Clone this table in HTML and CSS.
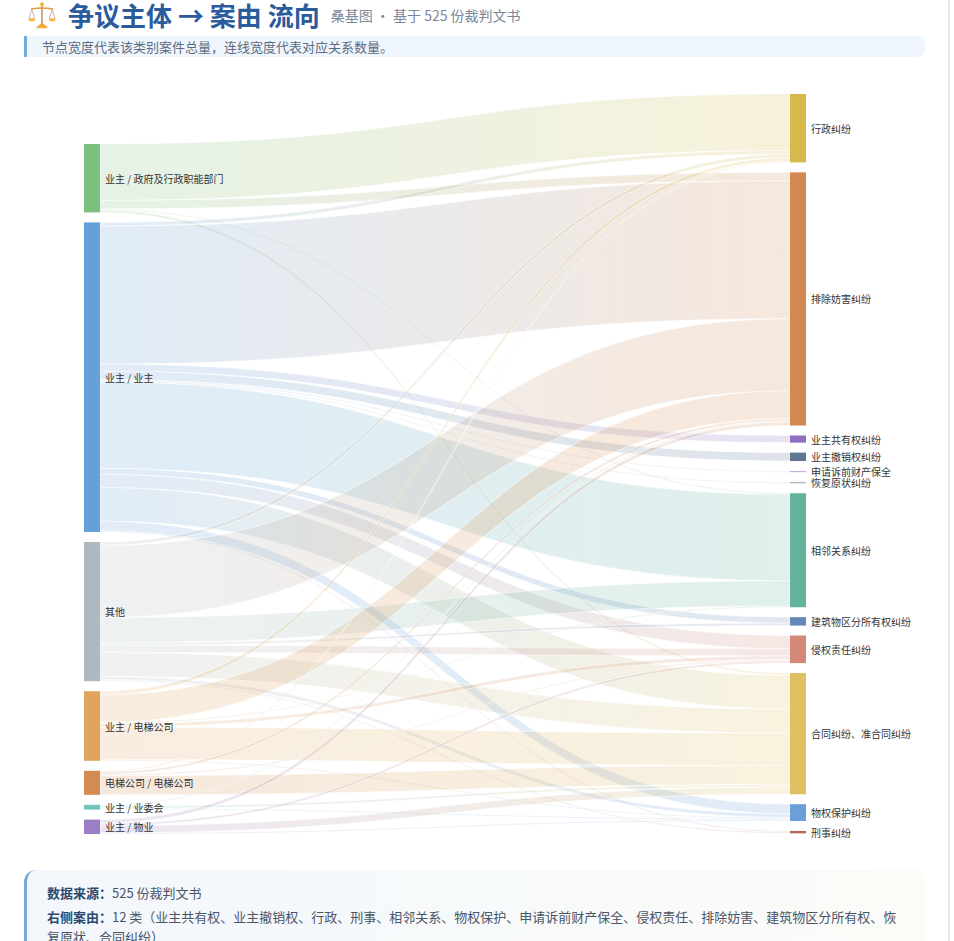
FILE: index.html
```html
<!DOCTYPE html>
<html lang="zh-CN">
<head>
<meta charset="utf-8">
<title>争议主体 → 案由 流向</title>
<link rel="stylesheet" href="styles.css">
</head>
<body>
<div class="page">
  <header class="header">
    <svg class="icon" viewBox="0 0 28 28" width="28" height="28" aria-hidden="true">
      <rect x="13.1" y="4" width="1.8" height="19" fill="#c9a27a"/>
      <path d="M3.5 8 Q14 6 24.5 8" stroke="#dc9c3b" stroke-width="1.7" fill="none" stroke-linecap="round"/>
      <circle cx="14" cy="3.2" r="2" fill="#f5b83f"/>
      <path d="M3.8 8.4 L1 17.2 M3.8 8.4 L6.6 17.2 M24.2 8.4 L21.4 17.2 M24.2 8.4 L27 17.2" stroke="#c7a0a6" stroke-width="0.8" fill="none"/>
      <path d="M0.3 17.2 h7 a3.5 3.3 0 0 1 -7 0z" fill="#f6b940"/>
      <path d="M20.7 17.2 h7 a3.5 3.3 0 0 1 -7 0z" fill="#f6b940"/>
      <path d="M9.5 25.5 L14 21.5 L18.5 25.5 Z" fill="#ef9f38"/>
      <rect x="8.5" y="25" width="11" height="2.2" rx="1" fill="#f3ae3c"/>
    </svg>
    <h1 class="title">争议主体 → 案由 流向</h1>
    <span class="subtitle">桑基图 · 基于 525 份裁判文书</span>
  </header>
  <p class="desc">节点宽度代表该类别案件总量，连线宽度代表对应关系数量。</p>
  <svg id="sankey" class="chart" width="948" height="800" viewBox="0 60 948 800"></svg>
  <div class="note">
    <p><b>数据来源：</b>525 份裁判文书</p>
    <p><b>右侧案由：</b>12 类（业主共有权、业主撤销权、行政、刑事、相邻关系、物权保护、申请诉前财产保全、侵权责任、排除妨害、建筑物区分所有权、恢复原状、合同纠纷）</p>
  </div>
</div>
<script src="sankey.js"></script>
</body>
</html>
```

FILE: styles.css
```css
html { overflow: hidden; }
body {
  margin: 0;
  background: #ffffff;
  font-family: "Noto Sans CJK SC", "Noto Sans", sans-serif;
}
.page {
  width: 948px;
  min-height: 941px;
  border-right: 2px solid #e3ebf4;
}
.header {
  display: flex;
  align-items: center;
  height: 30px;
  padding-left: 28px;
}
.icon { flex: none; width: 28px; height: 28px; }
.title {
  flex: none;
  margin: 0 0 0 12px;
  font-size: 26px;
  font-weight: 700;
  line-height: 30px;
  color: #2a5b9c;
  white-space: nowrap;
}
.subtitle {
  flex: none;
  margin-left: 11px;
  font-size: 14px;
  line-height: 30px;
  color: #7b8798;
  white-space: nowrap;
}
.desc {
  margin: 6px 0 0 24px;
  width: 883px;
  height: 21px;
  padding-left: 15px;
  border-left: 3px solid #75aadb;
  border-radius: 0 8px 8px 0;
  background: #f0f6fd;
  font-size: 13px;
  line-height: 21px;
  color: #5b6b80;
}
.chart { display: block; margin-top: 3px; }
.node-label {
  font-size: 10px;
  fill: #333333;
}
.note {
  margin: 10px 0 0 24px;
  width: 858px;
  padding: 13px 20px;
  border-left: 3px solid #75aadb;
  border-radius: 12px 12px 0 0;
  background: linear-gradient(90deg, #f3f7fc, #fbfcf8);
  font-size: 13px;
  line-height: 20px;
  color: #4a5568;
}
.note p { margin: 0 0 4px; }
.note b { color: #2c4a70; }
```

FILE: sankey.js
```js
(function () {
  var k = 1.2;
  var LX = 84, RX = 790, NW = 16;
  var left = [
    ['业主 / 政府及行政职能部门', '#7cc07f'],
    ['业主 / 业主', '#66a0d9'],
    ['其他', '#adb8bf'],
    ['业主 / 电梯公司', '#e0a45e'],
    ['电梯公司 / 电梯公司', '#d48b52'],
    ['业主 / 业委会', '#72c5bc'],
    ['业主 / 物业', '#9b7fc6']
  ];
  var right = [
    ['行政纠纷', '#d6b94a'],
    ['排除妨害纠纷', '#d38a52'],
    ['业主共有权纠纷', '#8f6fbf'],
    ['业主撤销权纠纷', '#5f7591'],
    ['申请诉前财产保全', '#c4aede'],
    ['恢复原状纠纷', '#a6b2c0'],
    ['相邻关系纠纷', '#63b39d'],
    ['建筑物区分所有权纠纷', '#6588b9'],
    ['侵权责任纠纷', '#d38878'],
    ['合同纠纷、准合同纠纷', '#dfbf5f'],
    ['物权保护纠纷', '#6a9fda'],
    ['刑事纠纷', '#b5665c']
  ];
  var raw = [
    [0,0,47],[0,1,7],[0,6,1],[0,9,2],
    [1,0,3],[1,1,115],[1,2,6],[1,3,7],[1,4,1],[1,5,1],[1,6,72],[1,7,5],[1,8,11],[1,9,28],[1,10,8],[1,11,1],
    [2,0,3],[2,1,60],[2,6,21],[2,7,2],[2,8,6],[2,9,20],[2,10,3],[2,11,1],
    [3,0,3],[3,1,23],[3,6,1],[3,8,3],[3,9,27],[3,10,1],
    [4,0,1],[4,1,2],[4,8,1],[4,9,16],
    [5,1,1],[5,9,2],[5,10,1],
    [6,1,3],[6,8,2],[6,9,6],[6,10,1]
  ];
  var links = raw.map(function (r) { return { s: r[0], t: r[1], v: r[2], w: r[2] * k }; });

  function layout(nodes, key, top, gap) {
    var y = top;
    return nodes.map(function (n, i) {
      var v = 0;
      links.forEach(function (l) { if (l[key] === i) v += l.v; });
      var h = v * k;
      var o = { name: n[0], color: n[1], y0: y, h: h };
      y += h + gap;
      return o;
    });
  }
  var L = layout(left, 's', 144, 10);
  var R = layout(right, 't', 94, 9.94);

  var sOff = L.map(function (n) { return n.y0; });
  var tOff = R.map(function (n) { return n.y0; });
  links.slice().sort(function (a, b) { return a.s - b.s || a.t - b.t; })
    .forEach(function (l) { l.sy = sOff[l.s]; sOff[l.s] += l.w; });
  links.slice().sort(function (a, b) { return a.t - b.t || a.s - b.s; })
    .forEach(function (l) { l.ty = tOff[l.t]; tOff[l.t] += l.w; });

  var x0 = LX + NW, x1 = RX, xm = (x0 + x1) / 2;
  var defs = '', paths = '';
  links.forEach(function (l, i) {
    var id = 'lg' + i;
    defs += '<linearGradient id="' + id + '" gradientUnits="userSpaceOnUse" x1="' + x0 + '" y1="0" x2="' + x1 + '" y2="0">' +
      '<stop offset="0" stop-color="' + L[l.s].color + '"/>' +
      '<stop offset="1" stop-color="' + R[l.t].color + '"/></linearGradient>';
    var a = l.sy, b = l.ty, w = l.w;
    var d = 'M' + x0 + ',' + a + ' C' + xm + ',' + a + ' ' + xm + ',' + b + ' ' + x1 + ',' + b +
      ' L' + x1 + ',' + (b + w) + ' C' + xm + ',' + (b + w) + ' ' + xm + ',' + (a + w) + ' ' + x0 + ',' + (a + w) + ' Z';
    paths += '<path d="' + d + '" fill="url(#' + id + ')" fill-opacity="0.2" stroke="#ffffff" stroke-opacity="0.75" stroke-width="0.7"/>';
  });

  var nodes = '', labels = '';
  L.forEach(function (n) {
    nodes += '<rect x="' + LX + '" y="' + n.y0 + '" width="' + NW + '" height="' + Math.max(n.h, 1) + '" fill="' + n.color + '"/>';
    labels += '<text class="node-label" x="' + (LX + NW + 5) + '" y="' + (n.y0 + n.h / 2) + '" dominant-baseline="central">' + n.name + '</text>';
  });
  R.forEach(function (n) {
    nodes += '<rect x="' + RX + '" y="' + n.y0 + '" width="' + NW + '" height="' + Math.max(n.h, 1) + '" fill="' + n.color + '"/>';
    labels += '<text class="node-label" x="' + (RX + NW + 5) + '" y="' + (n.y0 + n.h / 2) + '" dominant-baseline="central">' + n.name + '</text>';
  });

  document.getElementById('sankey').innerHTML =
    '<defs>' + defs + '</defs><g>' + paths + '</g><g>' + nodes + '</g><g>' + labels + '</g>';
})();
```
